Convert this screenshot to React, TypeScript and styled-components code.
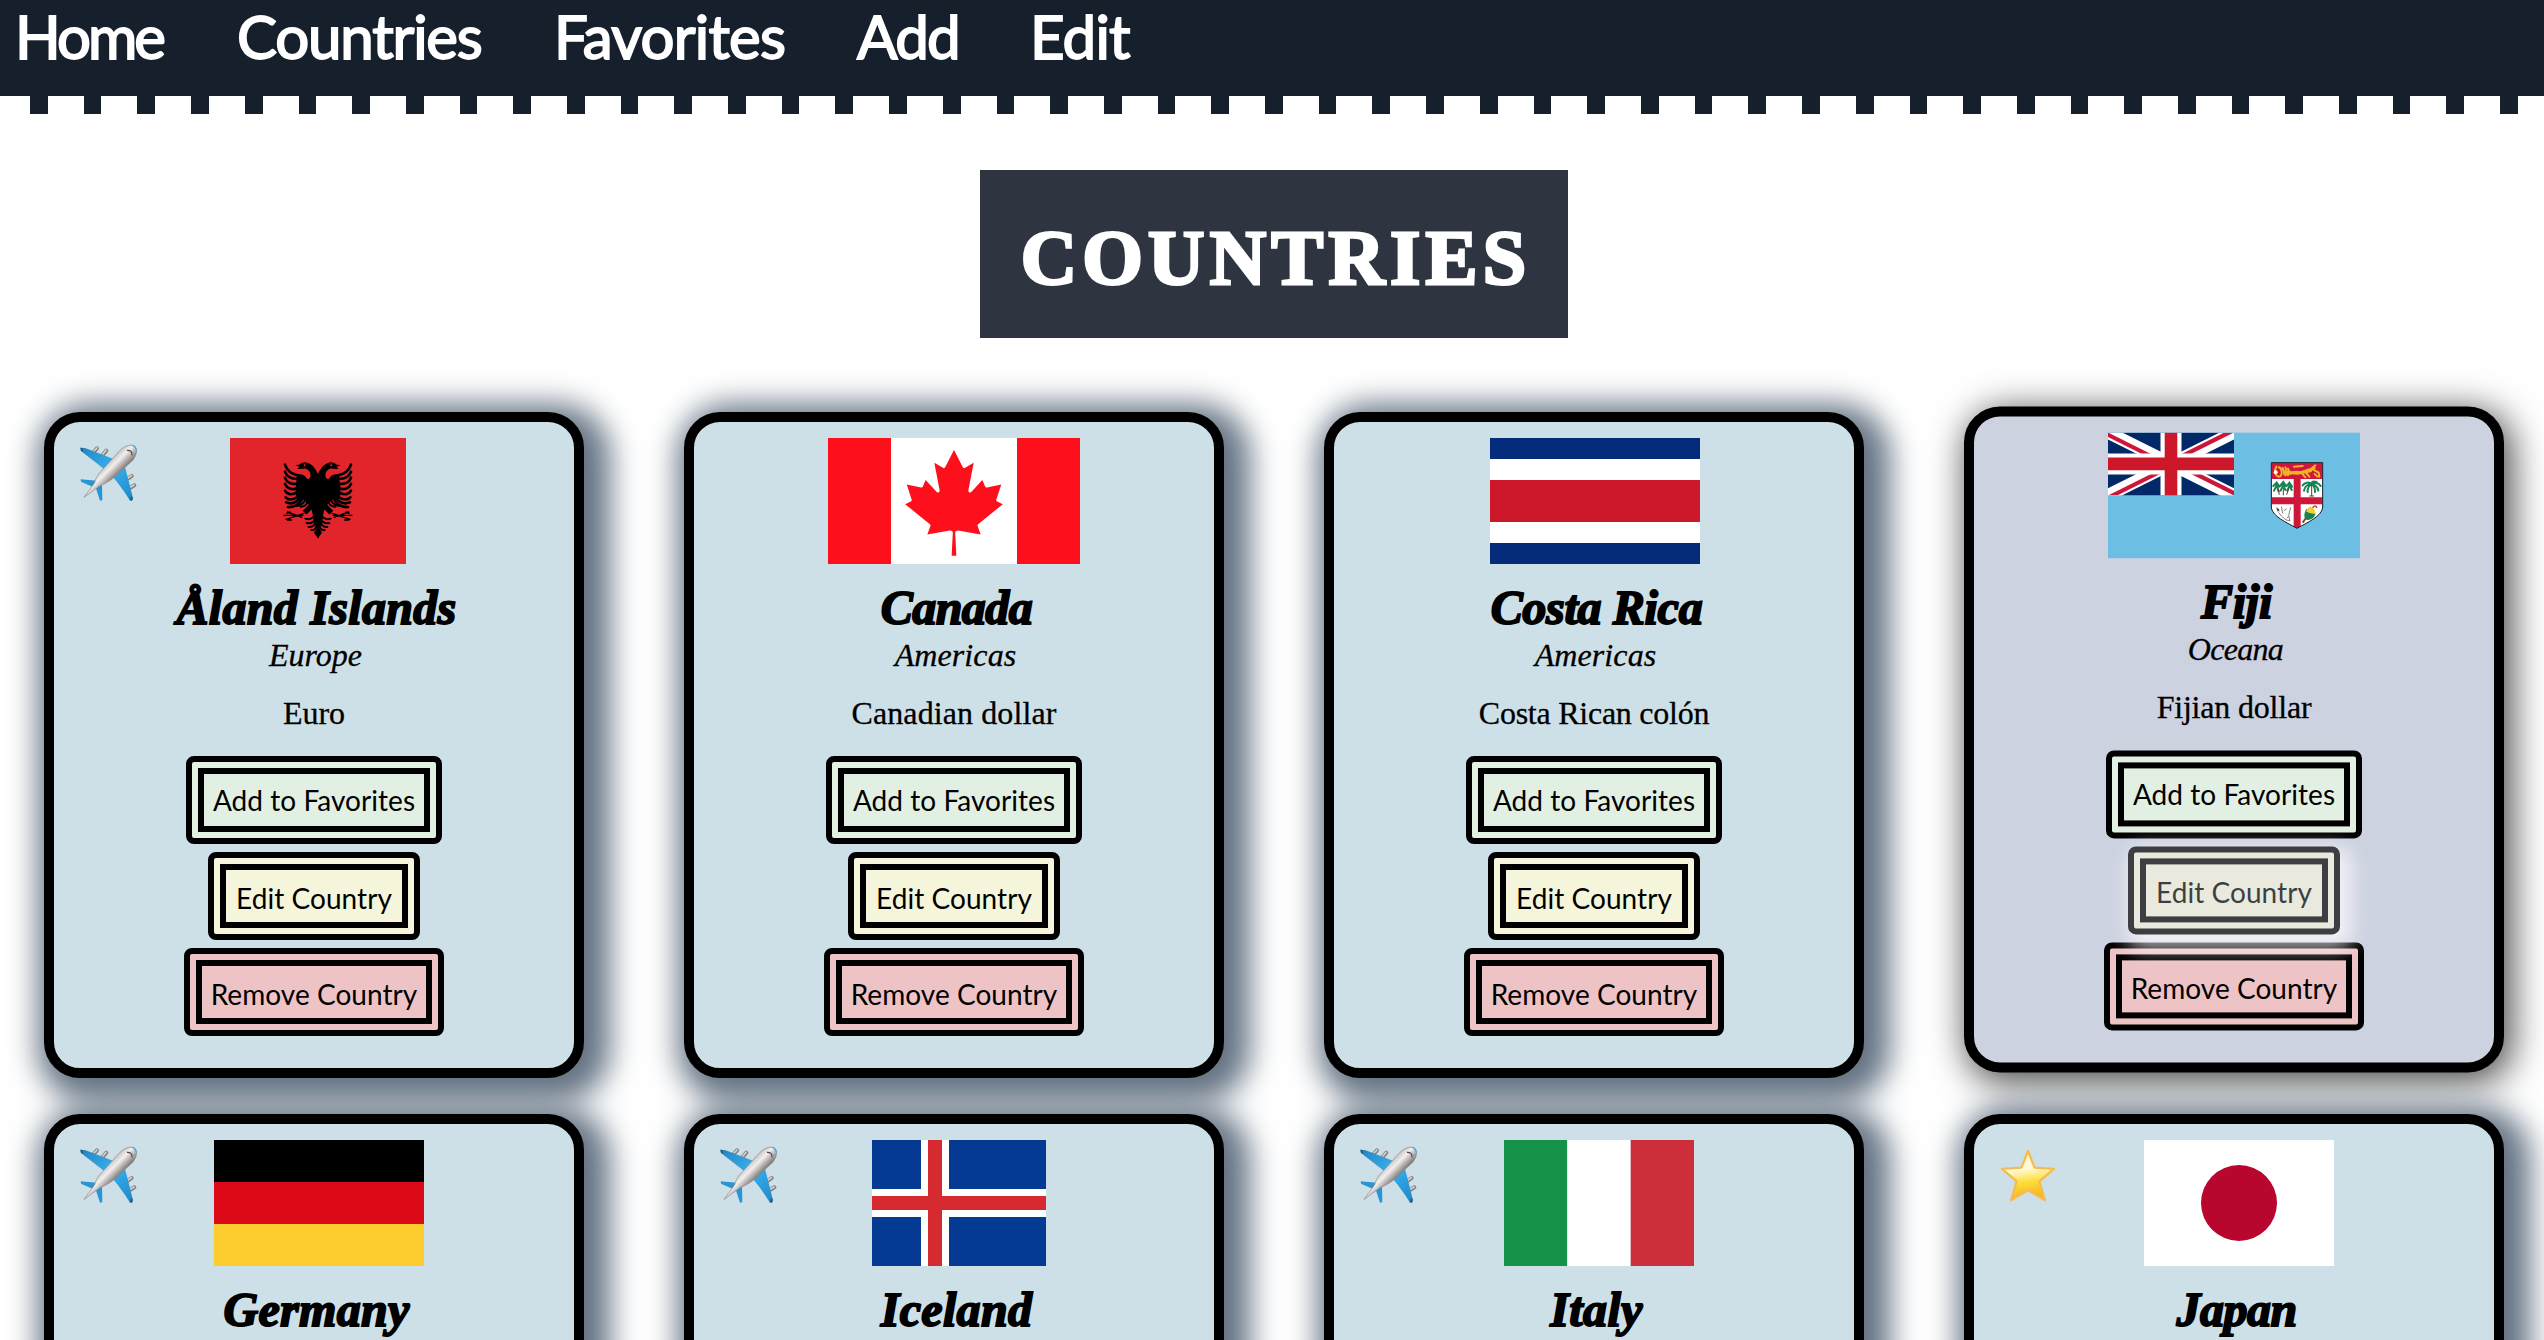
import React from "react";
import styled, { createGlobalStyle } from "styled-components";

const serif = '"Liberation Serif", "Noto Sans", serif';
const sans = 'Lato, "Open Sans", sans-serif';
const navy = "#16202c";

const GlobalStyle = createGlobalStyle`
  *, *::before, *::after { box-sizing: border-box; }
  body { margin: 0; background: #fff; color: #000; overflow: hidden; }
`;

const Page = styled.div`
  height: 1340px;
  overflow: hidden;
`;

const Nav = styled.nav`
  display: flex;
  height: 96px;
  padding-left: 15px;
  background: ${navy};
`;

const NavLink = styled.a<{ $width: number; $track: number }>`
  width: ${(p) => p.$width}px;
  white-space: nowrap;
  font: 400 60px/72px ${sans};
  letter-spacing: ${(p) => p.$track}px;
  color: #fff;
  -webkit-text-stroke: 1.8px #fff;
`;

const Stitching = styled.div`
  height: 18px;
  margin-left: -6px;
  background: repeating-linear-gradient(90deg, #fff 0 36px, ${navy} 36px 53.7px);
`;

const Banner = styled.h1`
  display: flex;
  align-items: center;
  justify-content: center;
  width: 588px;
  height: 168px;
  margin: 56px 0 74px 980px;
  padding: 7px 0 0 4px;
  background: #2e3541;
  color: #fff;
  font: 700 78px/1 ${serif};
  letter-spacing: 5.2px;
  -webkit-text-stroke: 3px #fff;
`;

const Grid = styled.main`
  display: grid;
  grid-template-columns: repeat(4, 540px);
  column-gap: 100px;
  row-gap: 36px;
  padding-left: 44px;
`;

const CardBox = styled.article<{ $raised?: boolean }>`
  position: relative;
  display: flex;
  flex-direction: column;
  align-items: center;
  height: 666px;
  padding-top: 16px;
  border: 10px solid #000;
  border-radius: 36px;
  background: ${(p) => (p.$raised ? "#cdd2e1" : "#cee0e7")};
  box-shadow: ${(p) =>
    p.$raised
      ? "5px 7px 36px 3px rgba(0, 0, 0, 0.7)"
      : "10px 8px 30px 16px #647383"};
  transform: ${(p) => (p.$raised ? "translateY(-5.6px)" : "none")};
`;

const FlagFrame = styled.div<{ $shift: number }>`
  height: 126px;
  padding-left: ${(p) => p.$shift * 2}px;
  svg { display: block; height: 126px; }
`;

const Badge = styled.span<{ $left: number; $top: number }>`
  position: absolute;
  left: ${(p) => p.$left}px;
  top: ${(p) => p.$top}px;
  line-height: 0;
`;

const Name = styled.h2<{ $track: number }>`
  margin: 20px 0 0;
  padding-left: 5px;
  font: italic 700 48px/48px ${serif};
  letter-spacing: ${(p) => p.$track}px;
  -webkit-text-stroke: 1.9px #000;
`;

const Region = styled.em<{ $track: number }>`
  margin-top: 5px;
  padding-left: 3px;
  font: italic 400 32px/36px ${serif};
  letter-spacing: ${(p) => p.$track}px;
  -webkit-text-stroke: 0.3px #000;
`;

const Currency = styled.p<{ $track: number }>`
  margin: 22px 0 25px;
  font: 400 32px/36px ${serif};
  letter-spacing: ${(p) => p.$track}px;
  -webkit-text-stroke: 0.3px #000;
`;

const Actions = styled.div`
  display: flex;
  flex-direction: column;
  align-items: center;
  gap: 8px;
`;

const ActionButton = styled.button<{ $width: number; $tone: string; $drop?: number; $active?: boolean }>`
  width: ${(p) => p.$width}px;
  height: 88px;
  padding: ${(p) => p.$drop ?? 0}px 0 0;
  border: 18px double #000;
  border-radius: 8px;
  background: ${(p) => p.$tone};
  color: #000;
  font: 400 28px/32px ${sans};
  letter-spacing: 0.05px;
  white-space: nowrap;
  opacity: ${(p) => (p.$active ? 0.7 : 1)};
  box-shadow: ${(p) => (p.$active ? "6px 8px 20px 6px #fff" : "none")};
`;

const AlbaniaFlag = () => {
  const half = (
    <g>
      <path d="M745 110C738 96 728 76 706 73C698 73 692 76 688 80L676 81L689 87L682 92C692 95 700 91 708 92C718 95 724 106 721 116C718 125 711 125 708 118C702 110 693 107 681 110L677 150L678 182L700 184L722 206L728 228L732 255L740 270L732 284L745 302Z" />
      <g fill="none" stroke="#000" strokeLinecap="round" strokeWidth="8">
        <path d="M684 112C664 108 650 96 645 80M684 122C664 124 650 114 645 101M684 136C664 141 650 132 645 119M684 150C664 158 650 150 645 138M684 162C664 174 650 168 645 158M686 174C668 188 654 186 647 178M690 180C676 198 660 198 648 193M698 182C686 202 668 208 654 207" />
        <path d="M706 186C700 198 688 204 674 204M714 190C710 200 702 206 692 206" strokeWidth="6" />
        <path d="M738 228C730 240 718 246 706 242M738 240C732 252 722 258 710 255M738 250C734 264 726 268 716 267M740 260C738 272 732 278 724 276" strokeWidth="6" />
        <path d="M724 204L704 224" strokeWidth="16" strokeLinecap="butt" />
        <path d="M702 226L648 244M698 232H642M696 238L652 222M660 222L650 226M664 246L652 246" strokeWidth="4" />
      </g>
    </g>
  );
  return (
    <svg width="176" viewBox="0 0 176 126">
      <rect width="176" height="126" fill="#e2242b" />
      <g transform="translate(-160 0) scale(.33333)">
        {half}
        <g transform="translate(1488 0) scale(-1 1)">{half}</g>
        <g fill="#e2242b">
          <circle cx="704" cy="82" r="3" />
          <circle cx="784" cy="82" r="3" />
        </g>
      </g>
    </svg>
  );
};

const CanadaFlag = () => (
  <svg width="252" viewBox="0 0 9600 4800">
    <rect width="9600" height="4800" fill="#fd0f1b" />
    <rect x="2400" width="4800" height="4800" fill="#fff" />
    <path
      transform="translate(4800 2456)"
      fill="#fd0f1b"
      d="M-90 2030l45-863a95 95 0 0 0-111-98l-859 151 116-320a65 65 0 0 0-20-73l-941-762 212-99a65 65 0 0 0 34-79l-186-572 542 115a65 65 0 0 0 73-38l105-247 423 454a65 65 0 0 0 111-57l-204-1052 327 189a65 65 0 0 0 91-27l332-652 332 652a65 65 0 0 0 91 27l327-189-204 1052a65 65 0 0 0 111 57l423-454 105 247a65 65 0 0 0 73 38l542-115-186 572a65 65 0 0 0 34 79l212 99-941 762a65 65 0 0 0-20 73l116 320-859-151a95 95 0 0 0-111 98l45 863z"
    />
  </svg>
);

const CostaRicaFlag = () => (
  <svg width="210" viewBox="0 0 210 126">
    <rect width="210" height="126" fill="#042c7a" />
    <rect y="21" width="210" height="84" fill="#fff" />
    <rect y="42" width="210" height="42" fill="#cd172b" />
  </svg>
);

const FijiFlag = () => (
  <svg width="252" viewBox="0 0 252 126">
    <defs>
      <clipPath id="canton"><path d="M0 0H60V30H0Z" /></clipPath>
      <clipPath id="saltire"><path d="M30 15H60V30ZM30 15V30H0ZM30 15H0V0ZM30 15V0H60Z" /></clipPath>
      <clipPath id="shield"><path d="M82 1148H236V1284C230 1310 195 1325 159 1345C123 1325 88 1310 82 1284Z" /></clipPath>
    </defs>
    <rect width="252" height="126" fill="#6cbfe3" />
    <g transform="scale(2.1)" clipPath="url(#canton)">
      <path d="M0 0H60V30H0Z" fill="#012867" />
      <path d="M0 0L60 30M60 0L0 30" stroke="#fff" strokeWidth="6" />
      <path d="M0 0L60 30M60 0L0 30" clipPath="url(#saltire)" stroke="#cd173a" strokeWidth="4" />
      <path d="M30 0V30M0 15H60" stroke="#fff" strokeWidth="10" />
      <path d="M30 0V30M0 15H60" stroke="#cd172b" strokeWidth="6" />
    </g>
    <g transform="translate(136 -352.4) scale(.33333)">
      <g clipPath="url(#shield)">
        <path d="M82 1148H236V1350H82Z" fill="#fff" />
        <path d="M82 1148H236V1197H82ZM149 1190H170V1350H149ZM82 1252H236V1273H82Z" fill="#cf173b" />
      </g>
      <g fill="none" stroke="#f3b229" strokeLinecap="round" strokeLinejoin="round" strokeWidth="6">
        <path d="M97 1160C90 1172 92 1186 104 1190C118 1190 114 1164 104 1162M116 1164L124 1186M124 1162L132 1186M132 1166L140 1182" />
        <path d="M120 1182C140 1186 150 1168 168 1178L190 1170L212 1164M150 1160L176 1158M174 1180L184 1192M184 1176L196 1190M204 1164L214 1156M206 1168L224 1178L226 1190M212 1182L220 1190" />
        <path d="M122 1176L160 1180L200 1172" strokeWidth="9" />
      </g>
      <circle cx="95" cy="1177" r="6" fill="#fff" />
      <g fill="none" stroke="#158454" strokeLinecap="round" strokeWidth="6">
        <path d="M203 1212C194 1204 182 1208 176 1216M203 1212C192 1212 182 1220 180 1232M203 1212C194 1218 190 1226 191 1236M203 1212C202 1206 208 1202 218 1206M203 1212C214 1206 226 1210 230 1218M203 1212C216 1216 222 1222 223 1232M203 1212C210 1218 214 1226 213 1236" />
        <path d="M88 1218L98 1208L106 1220M90 1232L98 1216L104 1234M108 1218L118 1206L126 1218M110 1232L118 1214L124 1230M128 1218L136 1208L144 1220M130 1232L137 1216L143 1230" />
      </g>
      <path d="M203 1214V1248M196 1248H210M102 1226L106 1244M118 1224V1246M134 1226L128 1244" fill="none" stroke="#7d2b20" strokeWidth="3" />
      <path d="M98 1282L106 1294M112 1280L116 1300M120 1292L128 1286M140 1282L134 1306L138 1322L126 1320L112 1308L104 1298M128 1314L134 1310" fill="none" stroke="#555" strokeWidth="2.2" />
      <path d="M97 1284L106 1288L102 1296Z" fill="#223d30" />
      <path d="M188 1286L214 1300C214 1314 196 1324 184 1318C178 1306 182 1296 188 1286Z" fill="#158454" />
      <path d="M186 1294L194 1282C202 1276 212 1286 216 1302C206 1302 194 1300 186 1294Z" fill="#f6cf36" />
      <path d="M206 1284C208 1276 218 1276 218 1284" fill="none" stroke="#cf3a2b" strokeWidth="4" />
      <path d="M186 1314L176 1328" stroke="#8a4a22" strokeWidth="6" />
      <path d="M82 1148H236V1284C230 1310 195 1325 159 1345C123 1325 88 1310 82 1284Z" fill="none" stroke="#1c1c24" strokeWidth="3" />
    </g>
  </svg>
);

const GermanyFlag = () => (
  <svg width="210" viewBox="0 0 210 126">
    <rect width="210" height="42" fill="#000" />
    <rect y="42" width="210" height="42" fill="#dc0a16" />
    <rect y="84" width="210" height="42" fill="#fdcd30" />
  </svg>
);

const IcelandFlag = () => (
  <svg width="174" viewBox="0 0 174 126">
    <rect width="174" height="126" fill="#053a93" />
    <path d="M49 0H77V126H49ZM0 49H174V77H0Z" fill="#fff" />
    <path d="M56 0H70V126H56ZM0 56H174V70H0Z" fill="#d52b30" />
  </svg>
);

const ItalyFlag = () => (
  <svg width="190" viewBox="0 0 190 126" preserveAspectRatio="none">
    <rect width="63.3" height="126" fill="#149248" />
    <rect x="63.3" width="63.4" height="126" fill="#fff" />
    <rect x="126.7" width="63.3" height="126" fill="#cd2e3a" />
  </svg>
);

const JapanFlag = () => (
  <svg width="190" viewBox="0 0 190 126">
    <rect width="190" height="126" fill="#fff" />
    <circle cx="95" cy="63" r="38" fill="#b9062e" />
  </svg>
);

const PlaneIcon = () => (
  <svg width="60" height="60" viewBox="28 15 180 180">
    <defs>
      <linearGradient id="fuselage" gradientUnits="userSpaceOnUse" x1="110" y1="75" x2="145" y2="110">
        <stop offset="0" stopColor="#c4c2c1" />
        <stop offset=".4" stopColor="#f1f0ef" />
        <stop offset="1" stopColor="#7f7874" />
      </linearGradient>
      <linearGradient id="wing" gradientUnits="userSpaceOnUse" x1="40" y1="30" x2="180" y2="180">
        <stop offset="0" stopColor="#2487c4" />
        <stop offset=".5" stopColor="#38b0ee" />
        <stop offset="1" stopColor="#228ccc" />
      </linearGradient>
    </defs>
    <g stroke="#85807d" strokeWidth="12" strokeLinecap="round">
      <path d="M72 42L82 31M99 51L110 38M175 122L186 114M182 149L194 142" />
    </g>
    <g stroke="#d6d3d1" strokeWidth="5" strokeLinecap="round">
      <path d="M73 39L82 30M100 48L109 37M175 120L185 113M183 147L193 141" />
    </g>
    <path d="M32 29L46 30L130 62L102 92C82 76 56 56 34 39Z" fill="url(#wing)" />
    <path d="M166 86L190 180L187 188L180 187C166 164 148 138 130 118Z" fill="url(#wing)" />
    <path d="M33 124L82 128L72 148L34 131ZM78 148L97 138L98 187L91 188Z" fill="#2795d6" />
    <path d="M32 29L38 30L42 42L34 39ZM190 180L187 188L180 187L184 174Z" fill="#2a5d7c" />
    <path d="M43 178L74 136C78 122 84 110 94 100L150 38C166 22 186 18 195 24C204 32 202 50 190 66L134 118C120 130 104 138 90 144Z" fill="url(#fuselage)" stroke="#8d8783" strokeWidth="2" />
    <path d="M172 37C182 36 188 42 187 52" fill="none" stroke="#4a4542" strokeWidth="3.5" />
    <path d="M184 21C194 19 203 28 201 42C198 32 192 25 184 21Z" fill="#3badea" />
  </svg>
);

const StarIcon = () => (
  <svg width="56" height="54" viewBox="0 0 56 54">
    <defs>
      <linearGradient id="gold" x1="0" y1="0" x2=".15" y2="1">
        <stop offset="0" stopColor="#fff3c0" />
        <stop offset=".42" stopColor="#fffbd9" />
        <stop offset=".68" stopColor="#fede3c" />
        <stop offset="1" stopColor="#f8b51d" />
      </linearGradient>
    </defs>
    <path d="M28 2L34.6 18.6L54 19.8L39.4 32.4L45 51.2L28 41.2L11 51.2L16.6 32.4L2 19.8L21.4 18.6Z" fill="url(#gold)" stroke="#f6bb4e" strokeWidth="2.2" strokeLinejoin="round" />
  </svg>
);

type Label = { text: string; track: number };
type Country = {
  name: Label;
  region?: Label;
  currency?: Label;
  Flag: React.FC;
  shift?: number;
  badge?: "plane" | "star";
  raised?: boolean;
};

const countries: Country[] = [
  { name: { text: "Åland Islands", track: 0.3 }, region: { text: "Europe", track: 0 }, currency: { text: "Euro", track: 0 }, Flag: AlbaniaFlag, shift: 4, badge: "plane" },
  { name: { text: "Canada", track: -0.5 }, region: { text: "Americas", track: 0.1 }, currency: { text: "Canadian dollar", track: 0.1 }, Flag: CanadaFlag },
  { name: { text: "Costa Rica", track: -0.3 }, region: { text: "Americas", track: 0.1 }, currency: { text: "Costa Rican colón", track: -0.25 }, Flag: CostaRicaFlag, shift: 1 },
  { name: { text: "Fiji", track: -0.2 }, region: { text: "Oceana", track: -0.7 }, currency: { text: "Fijian dollar", track: -0.2 }, Flag: FijiFlag, raised: true },
  { name: { text: "Germany", track: 0.3 }, Flag: GermanyFlag, shift: 5, badge: "plane" },
  { name: { text: "Iceland", track: 0.3 }, Flag: IcelandFlag, shift: 5, badge: "plane" },
  { name: { text: "Italy", track: 0.4 }, Flag: ItalyFlag, shift: 5, badge: "plane" },
  { name: { text: "Japan", track: -0.5 }, Flag: JapanFlag, shift: 5, badge: "star" },
];

const links = [
  { text: "Home", width: 222, track: -3 },
  { text: "Countries", width: 317, track: -1.2 },
  { text: "Favorites", width: 303, track: -0.8 },
  { text: "Add", width: 173, track: -1.8 },
  { text: "Edit", width: 110, track: -0.8 },
];

const CountryCard = ({ name, region, currency, Flag, shift = 0, badge, raised }: Country) => (
  <CardBox $raised={raised}>
    {badge === "plane" && <Badge $left={25} $top={21}><PlaneIcon /></Badge>}
    {badge === "star" && <Badge $left={26} $top={25}><StarIcon /></Badge>}
    <FlagFrame $shift={shift}><Flag /></FlagFrame>
    <Name $track={name.track}>{name.text}</Name>
    {region && <Region $track={region.track}>{region.text}</Region>}
    {currency && (
      <>
        <Currency $track={currency.track}>{currency.text}</Currency>
        <Actions>
          <ActionButton $width={256} $tone="#e2efe3">Add to Favorites</ActionButton>
          <ActionButton $width={212} $tone="#f5f5dc" $drop={3} $active={raised}>Edit Country</ActionButton>
          <ActionButton $width={260} $tone="#eec3c5" $drop={3}>Remove Country</ActionButton>
        </Actions>
      </>
    )}
  </CardBox>
);

export default function App() {
  return (
    <Page>
      <GlobalStyle />
      <header>
        <Nav>
          {links.map((l) => (
            <NavLink key={l.text} $width={l.width} $track={l.track}>{l.text}</NavLink>
          ))}
        </Nav>
        <Stitching />
      </header>
      <Banner>COUNTRIES</Banner>
      <Grid>
        {countries.map((c) => (
          <CountryCard key={c.name.text} {...c} />
        ))}
      </Grid>
    </Page>
  );
}
